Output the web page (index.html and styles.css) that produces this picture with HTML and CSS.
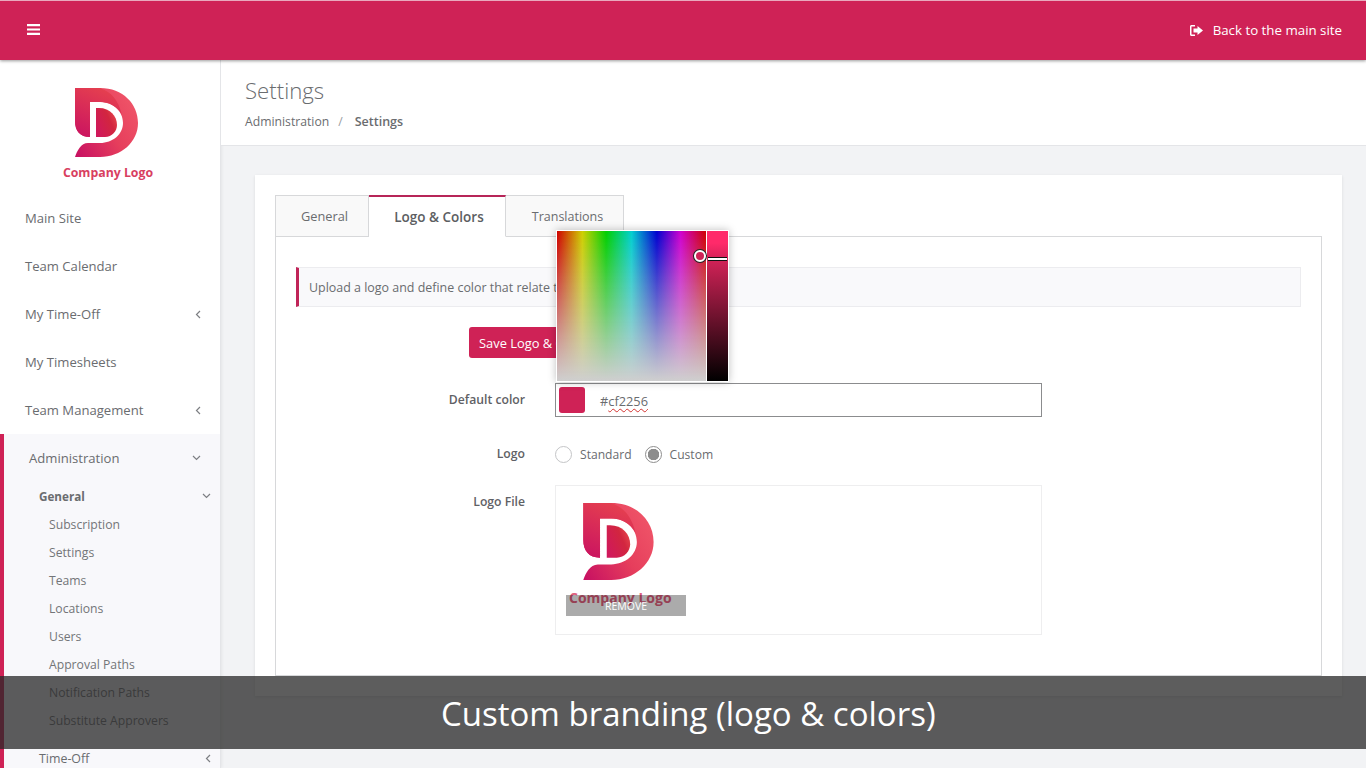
FILE: index.html
```html
<!DOCTYPE html>
<html lang="en">
<head>
<meta charset="utf-8">
<title>Settings</title>
<link rel="stylesheet" href="styles.css">
</head>
<body>
<svg class="defs" width="0" height="0" aria-hidden="true">
  <defs>
    <linearGradient id="gMain" x1="0" y1="1" x2="1" y2="0.3"><stop offset="0" stop-color="#c60f62"/><stop offset="0.55" stop-color="#e63e5c"/><stop offset="1" stop-color="#ef5468"/></linearGradient>
    <linearGradient id="gLeaf" x1="0.6" y1="0" x2="0.2" y2="1"><stop offset="0" stop-color="#e5404f"/><stop offset="1" stop-color="#cb1560"/></linearGradient>
    <linearGradient id="gIn" x1="0" y1="0.8" x2="1" y2="0.2"><stop offset="0" stop-color="#d0185c"/><stop offset="0.65" stop-color="#d2263f"/><stop offset="1" stop-color="#e84a50"/></linearGradient>
    <symbol id="dlogo" viewBox="0 0 64 69">
      <path fill="url(#gMain)" d="M0 0H25C48 0 63 16 63 35C63 54 46 69 25 69H0C2 63 6 55 13 55H25C38 55 48 46 48 35C48 23 38 14 25 14H15V49C5 49 0 43 0 33Z"/>
      <path fill="url(#gLeaf)" d="M0 0H25C36 4 43 11 47 27C42 18 34 14 25 14H15V49C5 49 0 43 0 33Z"/>
      <path fill="url(#gIn)" d="M21 20H24C35 20 42 28 42 37C42 43 37 49 30 49H21Z"/>
    </symbol>
  </defs>
</svg>
<header class="topbar">
  <svg class="burger" width="13" height="11" viewBox="0 0 13 11"><path fill="#fff" d="M0 0H13V2.200H0ZM0 4.400H13V6.600H0ZM0 8.800H13V11H0Z"/></svg>
  <a class="back">
    <svg width="13" height="11" viewBox="0 0 13 11"><path fill="#fff" d="M5 0H1.500C.7 0 0 .7 0 1.500V9.500C0 10.300.7 11 1.500 11H5V9.500H1.500V1.500H5ZM7.500 1V3.500H3.500V7.500H7.500V10L13 5.500Z"/></svg>
    <span>Back to the main site</span>
  </a>
</header>
<div class="shell">
  <aside class="sidebar">
    <div class="brand">
      <svg class="brand-mark" width="64" height="69"><use href="#dlogo"/></svg>
      <div class="brand-name">Company Logo</div>
    </div>
    <nav class="nav">
      <a class="nav-item">Main Site</a>
      <a class="nav-item">Team Calendar</a>
      <a class="nav-item">My Time-Off<svg class="chev" width="6" height="9" viewBox="0 0 6 9"><path d="M5 1L1.500 4.500L5 8"/></svg></a>
      <a class="nav-item">My Timesheets</a>
      <a class="nav-item">Team Management<svg class="chev" width="6" height="9" viewBox="0 0 6 9"><path d="M5 1L1.500 4.500L5 8"/></svg></a>
      <div class="nav-open">
        <a class="nav-item admin">Administration<svg class="chev" width="9" height="6" viewBox="0 0 9 6"><path d="M1 1L4.500 4.500L8 1"/></svg></a>
        <a class="nav-group strong">General<svg class="chev" width="9" height="6" viewBox="0 0 9 6"><path d="M1 1L4.500 4.500L8 1"/></svg></a>
        <a class="nav-sub">Subscription</a>
        <a class="nav-sub">Settings</a>
        <a class="nav-sub">Teams</a>
        <a class="nav-sub">Locations</a>
        <a class="nav-sub">Users</a>
        <a class="nav-sub">Approval Paths</a>
        <a class="nav-sub">Notification Paths</a>
        <a class="nav-sub">Substitute Approvers</a>
        <a class="nav-group timeoff">Time-Off<svg class="chev" width="6" height="9" viewBox="0 0 6 9"><path d="M5 1L1.500 4.500L5 8"/></svg></a>
      </div>
    </nav>
  </aside>
  <main class="main">
    <div class="page-head">
      <h1>Settings</h1>
      <div class="crumbs"><span>Administration</span><i>/</i><b>Settings</b></div>
    </div>
    <section class="card">
      <div class="tabs">
        <a class="tab">General</a>
        <a class="tab active">Logo &amp; Colors</a>
        <a class="tab">Translations</a>
      </div>
      <div class="pane">
        <div class="note">Upload a logo and define color that relate to your company branding.</div>
        <div class="form">
          <div class="row row-save"><div></div><div><button class="save">Save Logo &amp; Colors</button></div></div>
          <div class="row row-color">
            <label>Default color</label>
            <div class="colorfield"><span class="swatch"></span><span class="hex">#<u>cf2256</u></span></div>
          </div>
          <div class="row row-logo">
            <label>Logo</label>
            <div class="radios">
              <span class="radio"></span><span class="radio-label">Standard</span>
              <span class="radio on"></span><span class="radio-label">Custom</span>
            </div>
          </div>
          <div class="row row-file">
            <label>Logo File</label>
            <div class="filebox">
              <div class="logo-img">
                <svg class="file-mark" width="72" height="77"><use href="#dlogo"/></svg>
                <div class="file-name">Company Logo</div>
              </div>
              <div class="remove">REMOVE</div>
            </div>
          </div>
        </div>
      </div>
    </section>
  </main>
</div>
<div class="picker">
  <div class="sb"><span class="sb-dot"></span></div>
  <div class="hue"><span class="hue-mark"></span></div>
</div>
<div class="caption">Custom branding (logo &amp; colors)</div>
</body>
</html>
```
FILE: styles.css
```css
* { box-sizing: border-box; }
html, body { margin: 0; height: 768px; overflow: hidden; }
body {
  font-family: "Open Sans", "Noto Sans", "Liberation Sans", sans-serif;
  font-size: 12.600px;
  color: #6a6c6f;
  background: #f2f3f5;
  position: relative;
}
.defs { position: absolute; }
a { color: inherit; text-decoration: none; }

.topbar {
  height: 60px;
  border-top: 1px solid #e9a9bd;
  background: #cf2256;
  box-shadow: 0 1px 3px rgba(0,0,0,.4);
  display: flex;
  align-items: center;
  justify-content: space-between;
  padding: 0 24px 0 27px;
  position: relative;
  z-index: 3;
  color: #fff;
}
.burger { margin-top: -3px; }
.back { display: flex; align-items: center; gap: 10px; font-size: 13.300px; margin-top: -1px; }

.shell { display: flex; height: 708px; }

.sidebar {
  width: 221px;
  flex: none;
  background: #fff;
  border-right: 1px solid #e4e5e8;
  box-shadow: 1px 0 3px rgba(0,0,0,.06);
  display: flex;
  flex-direction: column;
}
.brand {
  flex: none;
  height: 134px;
  padding-top: 28px;
  display: flex;
  flex-direction: column;
  align-items: center;
}
.brand-mark { margin-left: -7px; }
.brand-name {
  font-weight: 700;
  font-size: 12.300px;
  line-height: 16px;
  margin-top: 8px;
  margin-left: -4px;
  color: #d8405f;
}
.nav { flex: none; display: flex; flex-direction: column; font-size: 13.100px; height: 574px; }
.nav-item {
  flex: none;
  height: 48px;
  padding: 0 19px 0 25px;
  display: flex;
  align-items: center;
  justify-content: space-between;
}
.chev { fill: none; stroke: #7d7f83; stroke-width: 1.200; flex: none; }
.nav-open {
  flex: 1;
  background: #f8f8fb;
  border-left: 4px solid #cf2256;
}
.nav-group {
  height: 28px;
  padding: 0 9px 0 35px;
  font-size: 12.400px;
  display: flex;
  align-items: center;
  justify-content: space-between;
}
.nav-group.strong { font-weight: 700; font-size: 11.700px; }
.nav-group.timeoff { margin-top: 10px; }
.nav-sub {
  height: 28px;
  padding-left: 45px;
  font-size: 12.200px;
  color: #737578;
  display: flex;
  align-items: center;
}

.main { flex: 1; min-width: 0; }
.page-head {
  height: 86px;
  background: #fff;
  border-bottom: 1px solid #e4e5e8;
  padding: 16px 24px 0;
}
.page-head h1 {
  margin: 0;
  font-size: 22.200px;
  font-weight: 300;
  line-height: 30px;
  color: #6a6c6f;
}
.crumbs { margin-top: 6px; font-size: 12.200px; line-height: 20px; display: flex; }
.crumbs i { font-style: normal; margin: 0 11px 0 9px; color: #9a9c9f; }
.crumbs b { font-weight: 600; font-size: 12.500px; margin-left: 1px; }

.card {
  margin: 29px 24px 0 34px;
  height: 521px;
  background: #fff;
  box-shadow: 0 1px 3px rgba(0,0,0,.1);
  padding: 20px;
}
.tabs { display: flex; height: 42px; position: relative; z-index: 1; font-size: 12.800px; }
.tab {
  height: 42px;
  border: 1px solid #d7d8da;
  border-left-width: 0;
  background: #f9f9f9;
  display: flex;
  align-items: center;
  justify-content: center;
  width: 94px;
  padding: 0 0 0 5px;
}
.tab:first-child { border-left-width: 1px; }
.tab.active {
  width: 137px;
  background: #fff;
  border-top: 2px solid #b72558;
  border-bottom-color: #fff;
  font-weight: 600;
  font-size: 13.500px;
  color: #5c5e62;
  padding: 0 0 0 4px;
}
.tab:last-child { width: 118px; padding-left: 6px; font-size: 12.500px; }
.pane {
  margin-top: -1px;
  height: 440px;
  border: 1px solid #d7d8da;
  padding: 30px 20px 0;
}
.note {
  height: 40px;
  border: 1px solid #ececef;
  border-left: 3px solid #c02458;
  background: #f9f9fb;
  padding-left: 10px;
  font-size: 12.450px;
  display: flex;
  align-items: center;
}
.row { display: grid; grid-template-columns: 229px 487px; column-gap: 30px; }
.row label { text-align: right; font-weight: 600; font-size: 12.200px; color: #5f6165; }
.row-save { margin-top: 20px; height: 31px; }
.save {
  height: 31px;
  padding: 1px 10px 0;
  border: 0;
  border-radius: 3px;
  background: #cf2256;
  color: #fff;
  font-family: inherit;
  font-size: 12.900px;
  margin-left: -86px;
  white-space: nowrap;
}
.row-color { margin-top: 25px; height: 34px; }
.row-color label { line-height: 34px; }
.colorfield {
  height: 34px;
  border: 1px solid #8b8c8e;
  display: flex;
  align-items: center;
  padding-left: 3px;
  background: #fff;
}
.swatch { width: 26px; height: 26px; border-radius: 3px; background: #cf2256; }
.hex { margin-left: 15px; padding-top: 2px; font-size: 12.800px; }
.hex u { text-decoration: underline wavy #d3322f 1px; text-underline-offset: 2px; }
.row-logo { margin-top: 26px; height: 22px; }
.row-logo label { line-height: 21px; }
.radios { display: flex; align-items: center; height: 22px; font-size: 12.100px; }
.radio {
  width: 17px; height: 17px;
  border: 1px solid #c4c5c7;
  border-radius: 50%;
  background: #fff;
  margin-right: 8px;
}
.radio.on {
  border-color: #8e8e8e;
  background: radial-gradient(circle, #8c8c8c 0 5.500px, #fff 6px);
}
.radio-label { margin-right: 13px; }
.row-file { margin-top: 20px; }
.row-file label { padding-top: 8px; }
.filebox {
  height: 150px;
  border: 1px solid #eeeeef;
  padding: 17px 0 0 10px;
  position: relative;
}
.logo-img { height: 105px; width: 120px; }
.file-mark { display: block; margin-left: 17px; }
.file-name {
  font-weight: 700;
  font-size: 14px;
  line-height: 20px;
  margin-top: 8px;
  margin-left: 3px;
  color: #e0607d;
  white-space: nowrap;
}
.remove {
  position: absolute;
  left: 10px;
  top: 109px;
  width: 120px;
  height: 21px;
  background: rgba(0,0,0,.33);
  color: #fff;
  font-size: 10.500px;
  line-height: 22px;
  text-align: center;
}

.picker {
  position: absolute;
  left: 556px;
  top: 230px;
  width: 173px;
  height: 152px;
  background: #fff;
  border: 1px solid #fff;
  box-shadow: 0 0 8px rgba(0,0,0,.25);
  display: flex;
  gap: 1px;
  z-index: 4;
}
.sb {
  width: 150px;
  height: 150px;
  position: relative;
  background:
    linear-gradient(to bottom, rgba(207,207,207,0), #cfcfcf),
    linear-gradient(to right, #cf0000, #cfcf00 17%, #00cf00 33%, #00cfcf 50%, #0000cf 67%, #cf00cf 83%, #cf0000);
}
.sb-dot {
  position: absolute;
  left: 137px;
  top: 19px;
  width: 12px;
  height: 12px;
  border-radius: 50%;
  border: 2px solid #fff;
  box-shadow: 0 0 0 1px #222;
  background: #cf2256;
}
.hue {
  width: 21px;
  height: 150px;
  position: relative;
  background: linear-gradient(to bottom, #ff2a6a 0, #ff2a6a 8%, #cf2256 20%, #000);
}
.hue-mark {
  position: absolute;
  left: 1px;
  right: 1px;
  top: 26px;
  height: 4px;
  background: #fff;
  border-top: 1px solid #111;
  border-bottom: 1px solid #111;
}

.caption {
  position: absolute;
  left: 0;
  right: 0;
  top: 676px;
  height: 73px;
  background: rgba(39,39,39,.75);
  color: #fff;
  font-size: 33px;
  line-height: 76px;
  padding-left: 441px;
  z-index: 5;
}
```
